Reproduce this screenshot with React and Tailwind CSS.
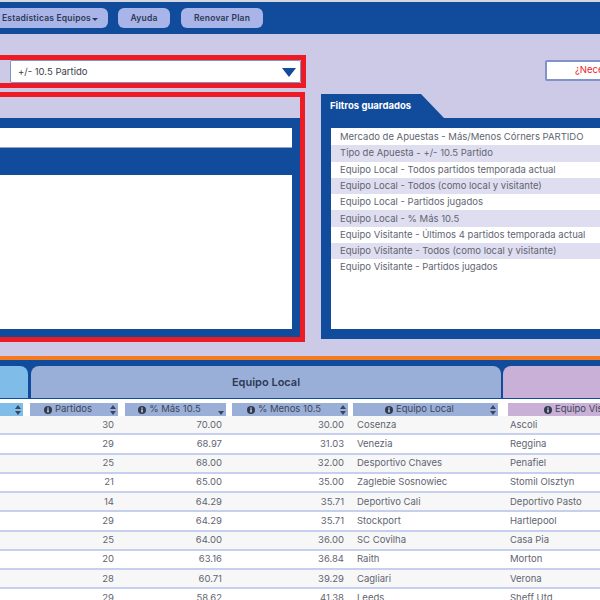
const savedFilters = [
  "Mercado de Apuestas - Más/Menos Córners PARTIDO",
  "Tipo de Apuesta - +/- 10.5 Partido",
  "Equipo Local - Todos partidos temporada actual",
  "Equipo Local - Todos (como local y visitante)",
  "Equipo Local - Partidos jugados",
  "Equipo Local - % Más 10.5",
  "Equipo Visitante - Últimos 4 partidos temporada actual",
  "Equipo Visitante - Todos (como local y visitante)",
  "Equipo Visitante - Partidos jugados",
];

const rows = [
  ["30", "70.00", "30.00", "Cosenza", "Ascoli"],
  ["29", "68.97", "31.03", "Venezia", "Reggina"],
  ["25", "68.00", "32.00", "Desportivo Chaves", "Penafiel"],
  ["21", "65.00", "35.00", "Zaglebie Sosnowiec", "Stomil Olsztyn"],
  ["14", "64.29", "35.71", "Deportivo Cali", "Deportivo Pasto"],
  ["29", "64.29", "35.71", "Stockport", "Hartlepool"],
  ["25", "64.00", "36.00", "SC Covilha", "Casa Pia"],
  ["20", "63.16", "36.84", "Raith", "Morton"],
  ["28", "60.71", "39.29", "Cagliari", "Verona"],
  ["29", "58.62", "41.38", "Leeds", "Sheff Utd"],
];

const InfoIcon = () => (
  <svg width="8" height="8" viewBox="0 0 8 8" className="shrink-0">
    <circle cx="4" cy="4" r="4" fill="#2f3a4f" />
    <rect x="3.4" y="3.4" width="1.2" height="3" fill="#fff" />
    <rect x="3.4" y="1.5" width="1.2" height="1.2" fill="#fff" />
  </svg>
);

const SortIcon = ({ down }) => (
  <svg width="6" height="10" viewBox="0 0 6 10" className="absolute right-[2px] top-[2px]">
    {!down && <path d="M3 0 L6 4 H0 Z" fill="#3b4660" />}
    <path d="M0 6 H6 L3 10 Z" fill="#3b4660" />
  </svg>
);

const TopButton = ({ className, children }) => (
  <button className={`h-[20px] rounded-[6px] bg-[#a9b4e8] text-[8.5px] font-semibold tracking-[0.2px] text-[#2d3a55] ${className}`}>
    {children}
  </button>
);

const HeaderCell = ({ className, label, down }) => (
  <div className={`relative flex h-[13px] items-center justify-center gap-[3px] pr-[12px] text-[9.5px] text-[#3d4658] ${className}`}>
    <InfoIcon />
    <span className="whitespace-nowrap">{label}</span>
    <SortIcon down={down} />
  </div>
);

export default function App() {
  return (
    <div className="h-[600px] w-[600px] overflow-hidden bg-white [font-family:Inter,sans-serif]">
      <div className="h-[2px] bg-[#d5d8de]" />

      {/* Top nav */}
      <nav className="flex h-[32px] items-center gap-[10px] bg-[#114b9c]">
        <TopButton className="-ml-[10px] flex w-[118px] items-center pl-[12px]">
          Estadísticas Equipos
          <span className="ml-[1px] mt-[2px] border-x-[3px] border-t-[3px] border-x-transparent border-t-[#2d3a55]" />
        </TopButton>
        <TopButton className="w-[52px]">Ayuda</TopButton>
        <TopButton className="ml-px w-[82px]">Renovar Plan</TopButton>
      </nav>

      {/* Filters */}
      <section className="h-[322px] bg-[#cccae6] pt-[21px]">
        <div className="flex items-start">
          <div className="h-[33px] w-[306px] shrink-0 border-y-[5px] border-r-[5px] border-[#ed1c24] pl-[10px]">
            <div className="flex h-full items-center justify-between rounded-[2px] border border-[#7f93c9] bg-white pl-[7px] pr-[4px] pt-px text-[9.5px] text-[#3a3f4a]">
              +/- 10.5 Partido
              <span className="border-x-[7px] border-t-[9px] border-x-transparent border-t-[#114b9c]" />
            </div>
          </div>
          <button className="ml-[239px] mt-[5px] h-[21px] w-[100px] shrink-0 whitespace-nowrap rounded-[2px] border-2 border-[#7f93c9] bg-white pl-[28px] text-left text-[9.5px] text-[#ed1c24]">
            ¿Necesitas ayuda?
          </button>
        </div>

        <div className="mt-[4px] flex items-start">
          <div className="h-[250px] w-[305px] shrink-0 border-y-[5px] border-r-[5px] border-[#ed1c24] pt-[21px]">
            <div className="h-[219px] bg-[#114b9c] pr-[8px] pt-[10px]">
              <div className="h-[20px] border-b border-[#8fa3d3] bg-white" />
              <div className="mt-[27px] h-[154px] bg-white" />
            </div>
          </div>

          <div className="ml-[16px] mt-[2px] w-[300px] shrink-0">
            <div className="flex h-[24px] w-[123px] items-center bg-[#114b9c] pl-[9px] text-[9.5px] font-bold text-white [clip-path:polygon(0_0,100px_0,123px_100%,0_100%)]">
              Filtros guardados
            </div>
            <div className="h-[221px] bg-[#114b9c] py-[10px] pl-[10px]">
              <ul className="h-[201px] bg-white pt-px">
                {savedFilters.map((filter, i) => (
                  <li
                    key={filter}
                    className={`flex h-[16.3px] items-center whitespace-nowrap pl-[9px] text-[9.5px] text-[#5f6570] ${i % 2 ? "bg-[#dfddf0]" : "bg-white"}`}
                  >
                    {filter}
                  </li>
                ))}
              </ul>
            </div>
          </div>
        </div>
      </section>

      {/* Results table */}
      <div className="h-[4px] bg-[#f47b20]" />
      <div className="flex h-[39px] items-start gap-[2px] bg-[#114b9c] pt-[6px]">
        <div className="h-[32px] w-[28px] shrink-0 rounded-tr-[8px] bg-[#7fbde8]" />
        <div className="ml-px flex h-[32px] w-[470px] shrink-0 items-center justify-center rounded-t-[8px] bg-[#9aafd8] text-[11px] font-semibold text-[#2d3a55]">
          Equipo Local
        </div>
        <div className="h-[32px] w-[120px] shrink-0 rounded-tl-[8px] bg-[#c9b0d6]" />
      </div>

      <div className="grid grid-cols-[27px_95px_107px_121px_155px_150px] pt-[4px]">
        <div className="relative mr-[4px] h-[13px] bg-[#7fbde8]"><SortIcon /></div>
        <HeaderCell className="ml-[3px] mr-[4px] bg-[#9aafd8]" label="Partidos" />
        <HeaderCell className="ml-[3px] mr-[3px] bg-[#9aafd8]" label="% Más 10.5" down />
        <HeaderCell className="ml-[3px] mr-[2px] bg-[#9aafd8]" label="% Menos 10.5" />
        <HeaderCell className="ml-[3px] mr-[7px] bg-[#9aafd8]" label="Equipo Local" />
        <div className="relative ml-[3px] flex h-[13px] items-center gap-[3px] bg-[#c9b0d6] pl-[36px] text-[9.5px] text-[#3d4658]">
          <InfoIcon />
          <span className="whitespace-nowrap">Equipo Visitante</span>
        </div>
      </div>

      {rows.map((row, i) => (
        <div
          key={row[3]}
          className={`grid h-[19.25px] grid-cols-[27px_95px_107px_121px_155px_150px] items-center border-b-2 border-[#c6d0ee] text-[9.5px] text-[#5f6570] ${i % 2 ? "bg-white" : "bg-[#f7f7f7]"}`}
        >
          <span />
          <span className="pr-[8px] text-right">{row[0]}</span>
          <span className="pr-[7px] text-right">{row[1]}</span>
          <span className="pr-[6px] text-right">{row[2]}</span>
          <span className="pl-[7px]">{row[3]}</span>
          <span className="pl-[5px]">{row[4]}</span>
        </div>
      ))}
    </div>
  );
}
